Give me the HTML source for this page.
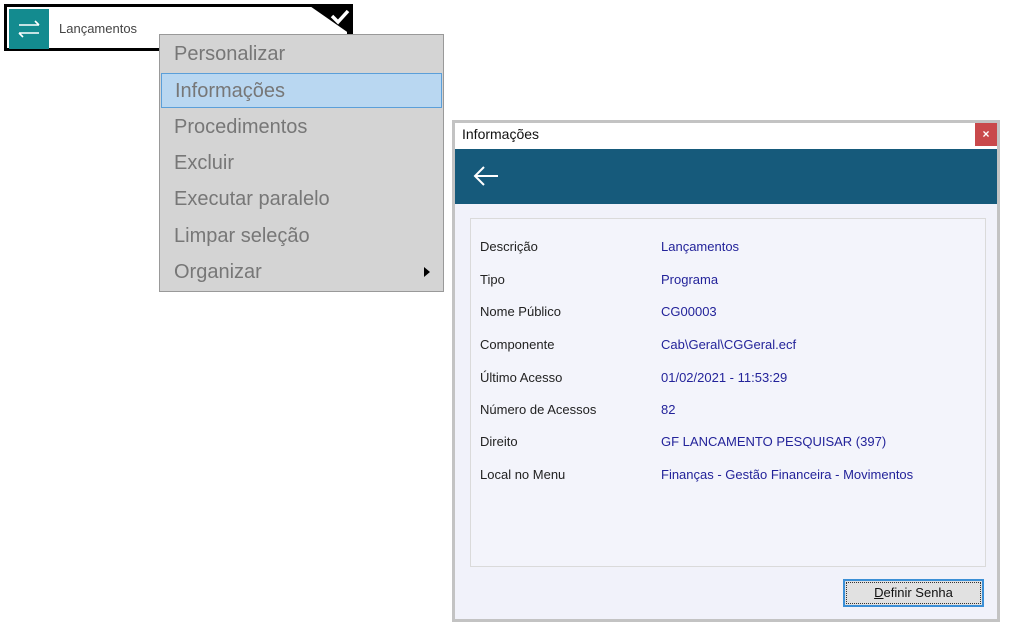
<!DOCTYPE html>
<html><head><meta charset="utf-8"><style>
*{margin:0;padding:0;box-sizing:border-box}
body{width:1010px;height:624px;background:#fff;position:relative;overflow:hidden;font-family:"Liberation Sans",sans-serif}
.abs{position:absolute}
.tile{left:4px;top:4px;width:346px;height:47px;border:3px solid #000;background:#fff}
.menu{left:159px;top:34px;width:285px;height:258px;background:#d4d4d4;border:1px solid #999}
.mi{position:absolute;left:0;width:283px;height:35px;font-size:20px;color:#777;padding-left:14px;line-height:35px}
.hl{background:#b9d7f1;border:1px solid #5b9fd9;left:1px;width:281px;padding-left:13px}
.dlg{left:452px;top:120px;width:548px;height:502px;border:3px solid #c3c3c3;background:#f1f2fa}
.lab{position:absolute;left:9px;font-size:13px;color:#222}
.val{position:absolute;left:190px;font-size:13px;color:#23239a}
</style></head><body>
<div class="abs tile">
  <div class="abs" style="left:2px;top:2px;width:40px;height:40px;background:#138b8f">
    <svg width="40" height="40" viewBox="0 0 40 40"><g stroke="#fff" stroke-width="1.6" fill="none"><path d="M10 16h20M26 12l4 4"/><path d="M30 24H10M14 28l-4-4"/></g></svg>
  </div>
  <div class="abs" style="left:52px;top:14px;font-size:13px;color:#444">Lançamentos</div>
  <svg class="abs" style="left:300px;top:-3px" width="46" height="32" viewBox="0 0 46 32"><path d="M0 0H46V32Z" fill="#000"/><path d="M25 12l6 6 10-11" stroke="#fff" stroke-width="3.5" fill="none"/></svg>
</div>
<div class="abs menu">
  <div class="mi" style="top:2px">Personalizar</div>
  <div class="mi hl" style="top:38px">Informações</div>
  <div class="mi" style="top:75px">Procedimentos</div>
  <div class="mi" style="top:111px">Excluir</div>
  <div class="mi" style="top:147px">Executar paralelo</div>
  <div class="mi" style="top:184px">Limpar seleção</div>
  <div class="mi" style="top:220px">Organizar</div>
  <svg class="abs" style="left:264px;top:232px" width="6" height="10"><path d="M0 0L6 5 0 10Z" fill="#000"/></svg>
</div>
<div class="abs dlg">
  <div class="abs" style="left:0;top:0;width:542px;height:26px;background:#fff"></div>
  <div class="abs" style="left:7px;top:3px;font-size:14px;color:#111">Informações</div>
  <div class="abs" style="left:520px;top:0;width:22px;height:23px;background:#c9494b;color:#fff;font-size:12px;text-align:center;line-height:22px;font-weight:bold">×</div>
  <div class="abs" style="left:0;top:26px;width:542px;height:55px;background:#165a7b">
    <svg class="abs" style="left:17px;top:15px" width="28" height="24"><path d="M26 12H3M12 3L3 12l9 9" stroke="#fff" stroke-width="2" fill="none"/></svg>
  </div>
  <div class="abs" style="left:15px;top:95px;width:516px;height:349px;border:1px solid #dadada;background:#f3f4fb">
    <div class="lab" style="top:20px">Descrição</div><div class="val" style="top:20px">Lançamentos</div>
    <div class="lab" style="top:53px">Tipo</div><div class="val" style="top:53px">Programa</div>
    <div class="lab" style="top:85px">Nome Público</div><div class="val" style="top:85px">CG00003</div>
    <div class="lab" style="top:118px">Componente</div><div class="val" style="top:118px">Cab\Geral\CGGeral.ecf</div>
    <div class="lab" style="top:151px">Último Acesso</div><div class="val" style="top:151px">01/02/2021 - 11:53:29</div>
    <div class="lab" style="top:183px">Número de Acessos</div><div class="val" style="top:183px">82</div>
    <div class="lab" style="top:215px">Direito</div><div class="val" style="top:215px">GF LANCAMENTO PESQUISAR (397)</div>
    <div class="lab" style="top:248px">Local no Menu</div><div class="val" style="top:248px">Finanças - Gestão Financeira - Movimentos</div>
  </div>
  <div class="abs" style="left:388px;top:456px;width:141px;height:28px;border:2px solid #3b8fd6;background:#e1e1e1">
    <div class="abs" style="left:1px;top:1px;right:1px;bottom:1px;border:1px dotted #333;text-align:center;font-size:13px;line-height:20px;color:#111"><u>D</u>efinir Senha</div>
  </div>
</div>
</body></html>
